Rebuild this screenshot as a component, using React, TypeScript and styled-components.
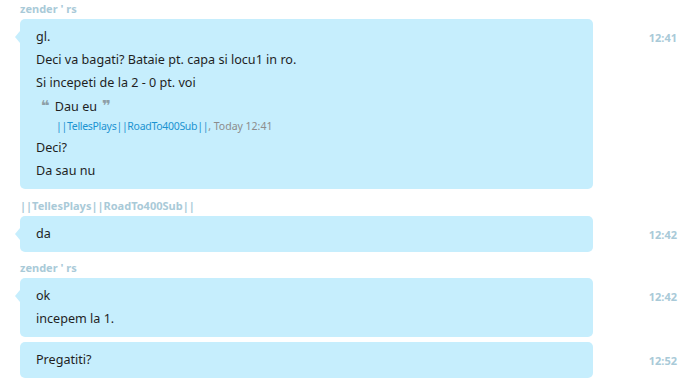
import React from "react";
import styled, { createGlobalStyle } from "styled-components";

const Global = createGlobalStyle`
  html, body { margin: 0; padding: 0; background: #ffffff; }
  body { font-family: "Noto Sans", "Open Sans", sans-serif; }
`;

const Page = styled.div`
  width: 696px;
  height: 387px;
  overflow: hidden;
  box-sizing: border-box;
  padding: 2px 19px 0 20px;
  display: flex;
  flex-direction: column;
`;

const Author = styled.div<{ $gap?: number }>`
  font-size: 11px;
  font-weight: 700;
  color: #a9cad8;
  height: 14px;
  line-height: 14px;
  margin-top: ${(p) => p.$gap ?? 0}px;
  margin-bottom: 3px;
`;

const Row = styled.div<{ $gap?: number }>`
  display: flex;
  align-items: flex-start;
  margin-top: ${(p) => p.$gap ?? 0}px;
`;

const Bubble = styled.div<{ $tail?: boolean }>`
  position: relative;
  width: 573px;
  box-sizing: border-box;
  background: #c6eefd;
  border-radius: 5px;
  padding: 6px 16px 7px 16px;
  color: #1f1f1f;
  font-size: 12.6px;
  ${(p) =>
    p.$tail
      ? `&::before {
    content: "";
    position: absolute;
    left: -5px;
    top: 12px;
    width: 0;
    height: 0;
    border-top: 6px solid transparent;
    border-bottom: 6px solid transparent;
    border-right: 5px solid #c6eefd;
  }`
      : ""}
`;

const Line = styled.div`
  line-height: 23px;
  height: 23px;
  white-space: nowrap;
`;

const Quote = styled.div`
  padding: 2px 0 0 5px;
`;

const QuoteText = styled.div`
  display: flex;
  align-items: center;
  gap: 5px;
  line-height: 22px;
  height: 22px;
`;

const QuoteMark = styled.span`
  font-family: "DejaVu Sans", sans-serif;
  font-size: 15px;
  font-weight: 700;
  color: #8d9ea6;
  line-height: 1;
  position: relative;
  top: -1px;
`;

const QuoteMeta = styled.div`
  padding-left: 15px;
  font-size: 10.5px;
  line-height: 16px;
  height: 18px;
  color: #8c8c8c;
`;

const Link = styled.span`
  color: #1b93d1;
  letter-spacing: -0.3px;
`;

const Time = styled.div`
  flex: 1;
  text-align: right;
  font-size: 11px;
  font-weight: 700;
  color: #a9cad8;
  padding-top: 12px;
  line-height: 14px;
`;

export default function App() {
  return (
    <>
      <Global />
      <Page>
        <Author>zender ' rs</Author>
        <Row>
          <Bubble $tail>
            <Line>gl.</Line>
            <Line>Deci va bagati? Bataie pt. capa si locu1 in ro.</Line>
            <Line>Si incepeti de la 2 - 0 pt. voi</Line>
            <Quote>
              <QuoteText>
                <QuoteMark>❝</QuoteMark>
                <span>Dau eu</span>
                <QuoteMark>❞</QuoteMark>
              </QuoteText>
              <QuoteMeta>
                <Link>||TellesPlays||RoadTo400Sub||</Link>, Today 12:41
              </QuoteMeta>
            </Quote>
            <Line>Deci?</Line>
            <Line>Da sau nu</Line>
          </Bubble>
          <Time>12:41</Time>
        </Row>
        <Author $gap={10}>||TellesPlays||RoadTo400Sub||</Author>
        <Row>
          <Bubble $tail>
            <Line>da</Line>
          </Bubble>
          <Time>12:42</Time>
        </Row>
        <Author $gap={9}>zender ' rs</Author>
        <Row>
          <Bubble $tail>
            <Line>ok</Line>
            <Line>incepem la 1.</Line>
          </Bubble>
          <Time>12:42</Time>
        </Row>
        <Row $gap={5}>
          <Bubble>
            <Line>Pregatiti?</Line>
          </Bubble>
          <Time>12:52</Time>
        </Row>
      </Page>
    </>
  );
}
